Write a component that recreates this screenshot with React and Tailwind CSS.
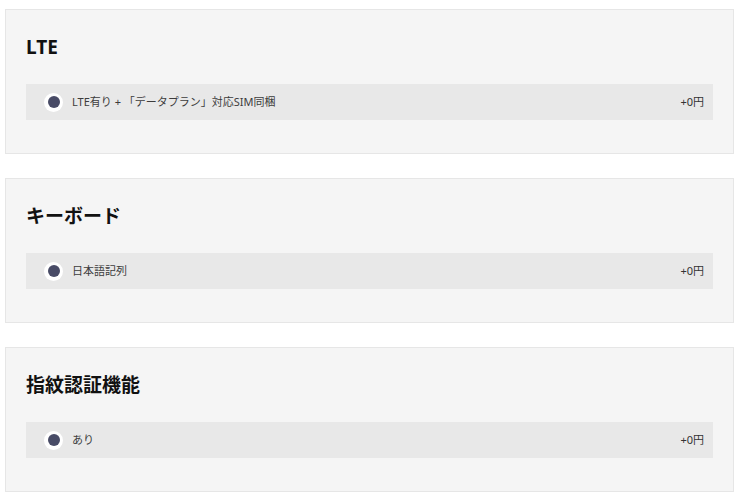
const sections = [
  { title: "LTE", option: "LTE有り + 「データプラン」対応SIM同梱", price: "+0円" },
  { title: "キーボード", option: "日本語記列", price: "+0円" },
  { title: "指紋認証機能", option: "あり", price: "+0円" },
];

const OptionCard = ({ title, option, price }) => {
  return (
    <section className="border border-[#e6e6e6] bg-[#f5f5f5] px-5 pt-[23px] pb-[33px]">
      <h2 className="text-[19px] leading-[28px] font-bold text-[#111] mb-[23px]">{title}</h2>
      <label className="h-9 bg-[#e8e8e8] flex items-center justify-between pl-[18px] pr-[9px]">
        <span className="flex items-center gap-[9px]">
          <span className="size-[19px] rounded-full bg-white flex items-center justify-center shrink-0">
            <span className="size-[12px] rounded-full bg-[#484b66]" />
          </span>
          <span className="text-[11px] text-[#3c3c3c]">{option}</span>
        </span>
        <span className="text-[11px] text-[#333]">{price}</span>
      </label>
    </section>
  );
};

export default function App() {
  return (
    <div
      className="min-h-screen bg-white pt-[9px] pl-[5px] pr-[6px] flex flex-col gap-6"
      style={{ fontFamily: '"Noto Sans", "Noto Sans CJK JP", sans-serif' }}
    >
      {sections.map((s) => (
        <OptionCard key={s.title} {...s} />
      ))}
    </div>
  );
}
